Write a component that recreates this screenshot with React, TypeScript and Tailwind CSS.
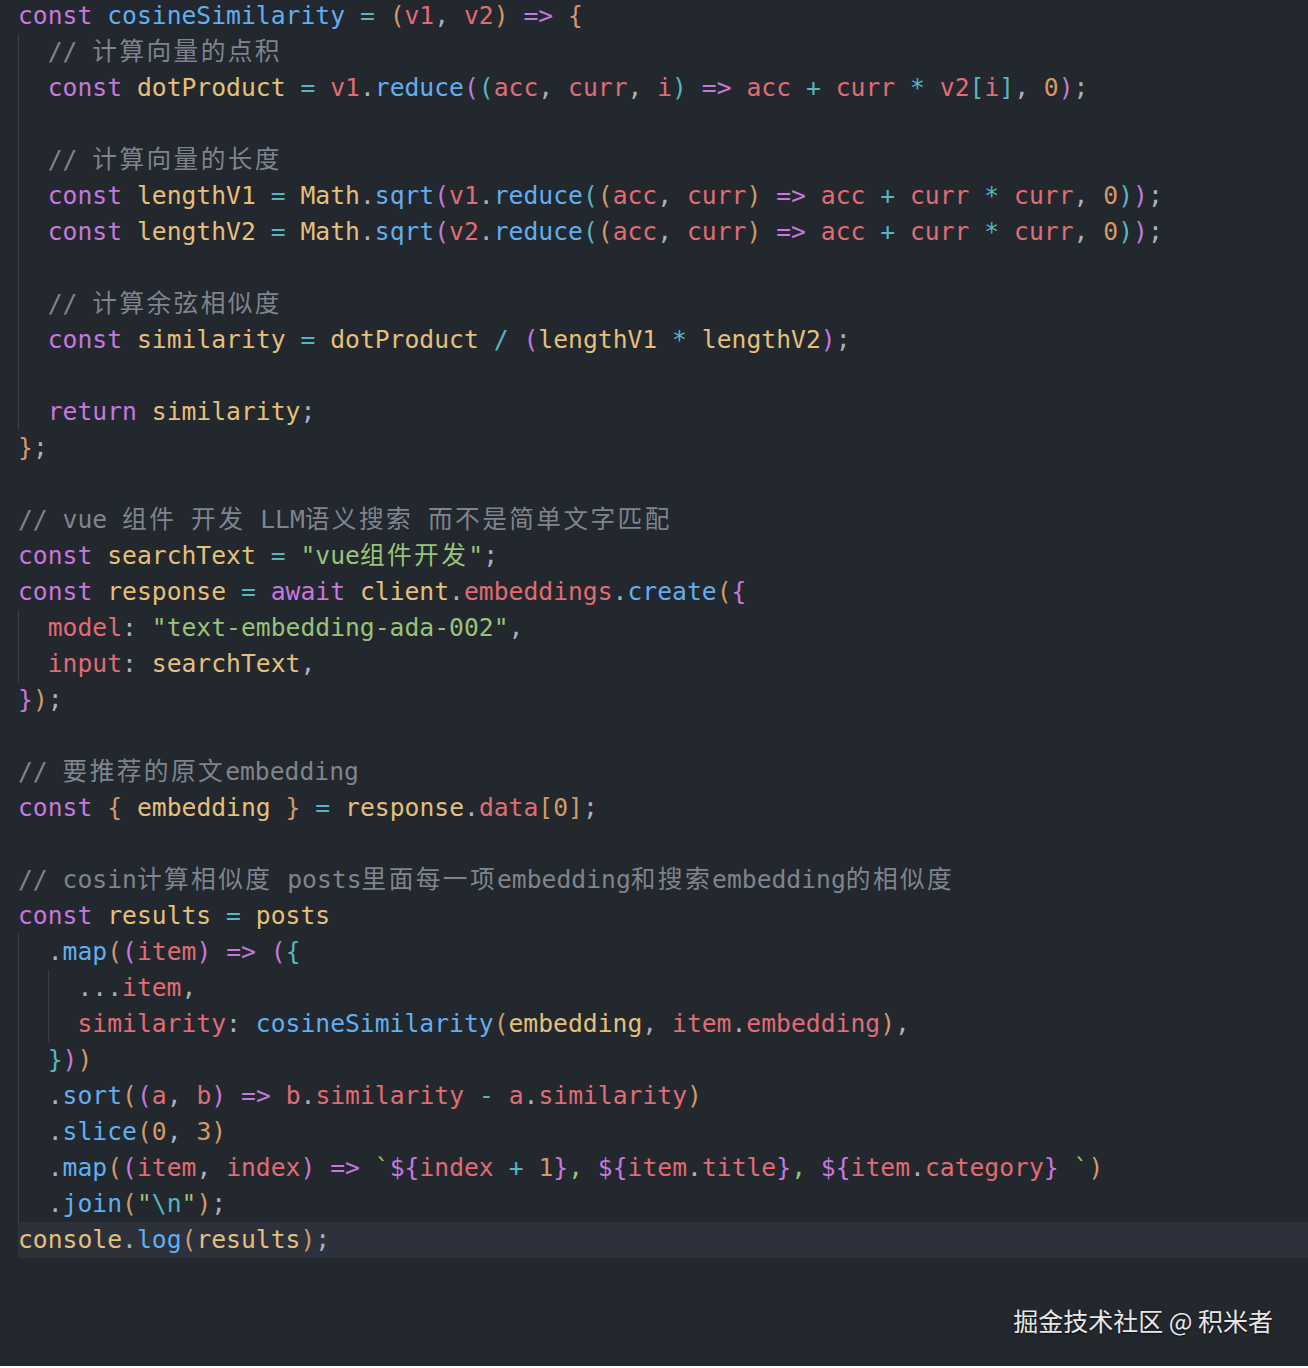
type Tok = [string, string];
type Line = { indent: number; toks: Tok[]; active?: boolean };

const colors: Record<string, string> = {
  k: "text-[#c678dd]",
  f: "text-[#61afef]",
  o: "text-[#56b6c2]",
  y: "text-[#e5c07b]",
  r: "text-[#e06c75]",
  n: "text-[#d19a66]",
  s: "text-[#98c379]",
  p: "text-[#abb2bf]",
  c: "text-[#7f848e]",
  b1: "text-[#d19a66]",
  b2: "text-[#c678dd]",
  b3: "text-[#56b6c2]",
};

const sp: Tok = ["p", " "];

const lines: Line[] = [
  { indent: 0, toks: [["k", "const "], ["f", "cosineSimilarity"], sp, ["o", "="], sp, ["b1", "("], ["r", "v1"], ["p", ", "], ["r", "v2"], ["b1", ")"], sp, ["k", "=>"], sp, ["b1", "{"]] },
  { indent: 1, toks: [["c", "// 计算向量的点积"]] },
  { indent: 1, toks: [["k", "const "], ["y", "dotProduct"], sp, ["o", "="], sp, ["r", "v1"], ["p", "."], ["f", "reduce"], ["b2", "("], ["b3", "("], ["r", "acc"], ["p", ", "], ["r", "curr"], ["p", ", "], ["r", "i"], ["b3", ")"], sp, ["k", "=>"], sp, ["r", "acc"], sp, ["o", "+"], sp, ["r", "curr"], sp, ["o", "*"], sp, ["r", "v2"], ["b3", "["], ["r", "i"], ["b3", "]"], ["p", ", "], ["n", "0"], ["b2", ")"], ["p", ";"]] },
  { indent: 1, toks: [] },
  { indent: 1, toks: [["c", "// 计算向量的长度"]] },
  { indent: 1, toks: [["k", "const "], ["y", "lengthV1"], sp, ["o", "="], sp, ["y", "Math"], ["p", "."], ["f", "sqrt"], ["b2", "("], ["r", "v1"], ["p", "."], ["f", "reduce"], ["b3", "("], ["b1", "("], ["r", "acc"], ["p", ", "], ["r", "curr"], ["b1", ")"], sp, ["k", "=>"], sp, ["r", "acc"], sp, ["o", "+"], sp, ["r", "curr"], sp, ["o", "*"], sp, ["r", "curr"], ["p", ", "], ["n", "0"], ["b3", ")"], ["b2", ")"], ["p", ";"]] },
  { indent: 1, toks: [["k", "const "], ["y", "lengthV2"], sp, ["o", "="], sp, ["y", "Math"], ["p", "."], ["f", "sqrt"], ["b2", "("], ["r", "v2"], ["p", "."], ["f", "reduce"], ["b3", "("], ["b1", "("], ["r", "acc"], ["p", ", "], ["r", "curr"], ["b1", ")"], sp, ["k", "=>"], sp, ["r", "acc"], sp, ["o", "+"], sp, ["r", "curr"], sp, ["o", "*"], sp, ["r", "curr"], ["p", ", "], ["n", "0"], ["b3", ")"], ["b2", ")"], ["p", ";"]] },
  { indent: 1, toks: [] },
  { indent: 1, toks: [["c", "// 计算余弦相似度"]] },
  { indent: 1, toks: [["k", "const "], ["y", "similarity"], sp, ["o", "="], sp, ["y", "dotProduct"], sp, ["o", "/"], sp, ["b2", "("], ["y", "lengthV1"], sp, ["o", "*"], sp, ["y", "lengthV2"], ["b2", ")"], ["p", ";"]] },
  { indent: 1, toks: [] },
  { indent: 1, toks: [["k", "return "], ["y", "similarity"], ["p", ";"]] },
  { indent: 0, toks: [["b1", "}"], ["p", ";"]] },
  { indent: 0, toks: [] },
  { indent: 0, toks: [["c", "// vue 组件 开发 LLM语义搜索 而不是简单文字匹配"]] },
  { indent: 0, toks: [["k", "const "], ["y", "searchText"], sp, ["o", "="], sp, ["s", "\"vue组件开发\""], ["p", ";"]] },
  { indent: 0, toks: [["k", "const "], ["y", "response"], sp, ["o", "="], sp, ["k", "await "], ["y", "client"], ["p", "."], ["r", "embeddings"], ["p", "."], ["f", "create"], ["b1", "("], ["b2", "{"]] },
  { indent: 1, toks: [["r", "model"], ["p", ": "], ["s", "\"text-embedding-ada-002\""], ["p", ","]] },
  { indent: 1, toks: [["r", "input"], ["p", ": "], ["y", "searchText"], ["p", ","]] },
  { indent: 0, toks: [["b2", "}"], ["b1", ")"], ["p", ";"]] },
  { indent: 0, toks: [] },
  { indent: 0, toks: [["c", "// 要推荐的原文embedding"]] },
  { indent: 0, toks: [["k", "const "], ["b1", "{"], sp, ["y", "embedding"], sp, ["b1", "}"], sp, ["o", "="], sp, ["y", "response"], ["p", "."], ["r", "data"], ["b1", "["], ["n", "0"], ["b1", "]"], ["p", ";"]] },
  { indent: 0, toks: [] },
  { indent: 0, toks: [["c", "// cosin计算相似度 posts里面每一项embedding和搜索embedding的相似度"]] },
  { indent: 0, toks: [["k", "const "], ["y", "results"], sp, ["o", "="], sp, ["y", "posts"]] },
  { indent: 1, toks: [["p", "."], ["f", "map"], ["b1", "("], ["b2", "("], ["r", "item"], ["b2", ")"], sp, ["k", "=>"], sp, ["b2", "("], ["b3", "{"]] },
  { indent: 2, toks: [["p", "..."], ["r", "item"], ["p", ","]] },
  { indent: 2, toks: [["r", "similarity"], ["p", ": "], ["f", "cosineSimilarity"], ["b1", "("], ["y", "embedding"], ["p", ", "], ["r", "item"], ["p", "."], ["r", "embedding"], ["b1", ")"], ["p", ","]] },
  { indent: 1, toks: [["b3", "}"], ["b2", ")"], ["b1", ")"]] },
  { indent: 1, toks: [["p", "."], ["f", "sort"], ["b1", "("], ["b2", "("], ["r", "a"], ["p", ", "], ["r", "b"], ["b2", ")"], sp, ["k", "=>"], sp, ["r", "b"], ["p", "."], ["r", "similarity"], sp, ["o", "-"], sp, ["r", "a"], ["p", "."], ["r", "similarity"], ["b1", ")"]] },
  { indent: 1, toks: [["p", "."], ["f", "slice"], ["b1", "("], ["n", "0"], ["p", ", "], ["n", "3"], ["b1", ")"]] },
  { indent: 1, toks: [["p", "."], ["f", "map"], ["b1", "("], ["b2", "("], ["r", "item"], ["p", ", "], ["r", "index"], ["b2", ")"], sp, ["k", "=>"], sp, ["s", "`"], ["k", "${"], ["r", "index"], sp, ["o", "+"], sp, ["n", "1"], ["k", "}"], ["s", ", "], ["k", "${"], ["r", "item"], ["p", "."], ["r", "title"], ["k", "}"], ["s", ", "], ["k", "${"], ["r", "item"], ["p", "."], ["r", "category"], ["k", "}"], ["s", " `"], ["b1", ")"]] },
  { indent: 1, toks: [["p", "."], ["f", "join"], ["b1", "("], ["s", "\""], ["o", "\\n"], ["s", "\""], ["b1", ")"], ["p", ";"]] },
  { indent: 0, active: true, toks: [["y", "console"], ["p", "."], ["f", "log"], ["b1", "("], ["y", "results"], ["b1", ")"], ["p", ";"]] },
];

// CJK runs get a little extra spacing so they sit as wide as in the editor
const renderText = (text: string) =>
  text.split(/([\u4e00-\u9fff]+)/).map((part, i) =>
    /[\u4e00-\u9fff]/.test(part) ? (
      <span key={i} className="tracking-[2.4px]">{part}</span>
    ) : (
      part
    )
  );

const CodeLine = ({ line }: { line: Line }) => (
  <div
    className={`flex h-[36px] items-center whitespace-pre leading-[36px] ${
      line.active ? "bg-[#2c313c]" : ""
    }`}
  >
    {Array.from({ length: line.indent }).map((_, i) => (
      <span key={i} className="inline-block h-full w-[2ch] border-l border-[#3b4048]" />
    ))}
    {line.toks.map(([c, t], i) => (
      <span key={i} className={colors[c]}>
        {renderText(t)}
      </span>
    ))}
  </div>
);

export default function App() {
  return (
    <div className="min-h-[1368px] w-full bg-[#23272e]">
      <div
        className="mt-[-2px] pl-[18px] text-[24.7px]"
        style={{ fontFamily: "'DejaVu Sans Mono', 'Noto Sans CJK SC', monospace" }}
      >
        {lines.map((line, i) => (
          <CodeLine key={i} line={line} />
        ))}
      </div>
      <div className="flex justify-end pr-[35px] pt-[44px]">
        <span
          className="text-[25px] text-[#e8e8e8] [text-shadow:0_1px_2px_rgba(0,0,0,0.6)]"
          style={{ fontFamily: "'Noto Sans CJK SC', 'Noto Sans', sans-serif" }}
        >
          掘金技术社区 @ 积米者
        </span>
      </div>
    </div>
  );
}
